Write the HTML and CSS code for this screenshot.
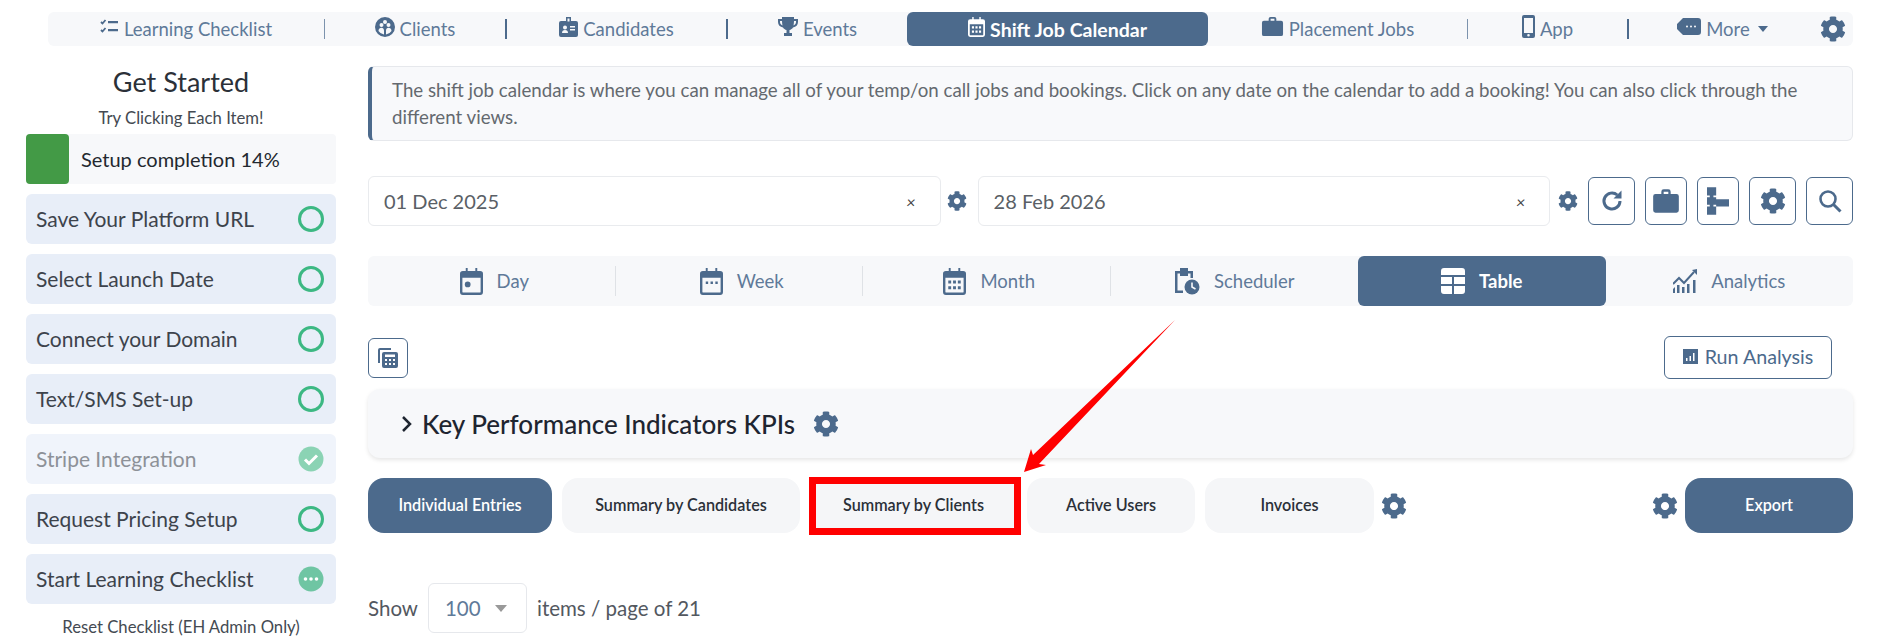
FILE: index.html
```html
<!DOCTYPE html>
<html lang="en">

<head>
  <meta charset="UTF-8">
  <meta name="viewport" content="width=device-width, initial-scale=1.0">
  <title>Shift Job Calendar</title>
  <link rel="stylesheet" href="styles.css">
</head>

<body>
  <svg class="defs" width="0" height="0">
    <symbol id="gear" viewBox="0 0 512 512">
      <path d="M487.4 315.7l-42.6-24.6c4.3-23.2 4.3-47 0-70.2l42.6-24.6c4.9-2.8 7.1-8.6 5.5-14-11.1-35.6-30-67.8-54.7-94.6-3.8-4.1-10-5.1-14.8-2.3L380.8 110c-17.9-15.4-38.5-27.3-60.8-35.1V25.8c0-5.6-3.9-10.5-9.4-11.7-36.7-8.2-74.3-7.8-109.2 0-5.5 1.2-9.4 6.1-9.4 11.7V75c-22.2 7.9-42.8 19.8-60.8 35.1L88.7 85.5c-4.9-2.8-11-1.9-14.8 2.3-24.7 26.7-43.6 58.9-54.7 94.6-1.7 5.4.6 11.2 5.5 14L67.3 221c-4.3 23.2-4.3 47 0 70.2l-42.6 24.6c-4.9 2.8-7.1 8.6-5.5 14 11.1 35.6 30 67.8 54.7 94.6 3.8 4.1 10 5.1 14.8 2.3l42.6-24.6c17.9 15.4 38.5 27.3 60.8 35.1v49.2c0 5.6 3.9 10.5 9.4 11.7 36.7 8.2 74.3 7.8 109.2 0 5.5-1.2 9.4-6.1 9.4-11.7v-49.2c22.2-7.9 42.8-19.8 60.8-35.1l42.6 24.6c4.9 2.8 11 1.9 14.8-2.3 24.7-26.7 43.6-58.9 54.7-94.6 1.5-5.5-.7-11.3-5.6-14.1zM256 336c-44.1 0-80-35.9-80-80s35.9-80 80-80 80 35.9 80 80-35.9 80-80 80z"/>
    </symbol>
    <symbol id="brief" viewBox="0 0 24 24">
      <path d="M8 6V4a2 2 0 0 1 2-2h4a2 2 0 0 1 2 2v2h5a2 2 0 0 1 2 2v12a2 2 0 0 1-2 2H3a2 2 0 0 1-2-2V8a2 2 0 0 1 2-2zm2 0h4V4h-4z" fill-rule="evenodd"/>
    </symbol>
    <symbol id="cal_day" viewBox="0 0 24 28">
      <path d="M6 0h2v3h8V0h2v3h3a3 3 0 0 1 3 3v19a3 3 0 0 1-3 3H3a3 3 0 0 1-3-3V6a3 3 0 0 1 3-3h3zM2.500 10v15a.5.5 0 0 0 .5.500h18a.5.5 0 0 0 .5-.5V10z" fill-rule="evenodd"/>
      <circle cx="8" cy="17" r="3"/>
    </symbol>
    <symbol id="cal_week" viewBox="0 0 24 28">
      <path d="M6 0h2v3h8V0h2v3h3a3 3 0 0 1 3 3v19a3 3 0 0 1-3 3H3a3 3 0 0 1-3-3V6a3 3 0 0 1 3-3h3zM2.500 10v15a.5.5 0 0 0 .5.500h18a.5.5 0 0 0 .5-.5V10z" fill-rule="evenodd"/>
      <path d="M6 14h2.500v2.500H6zM11 14h2.500v2.500H11zM16 14h2.500v2.500H16z"/>
    </symbol>
    <symbol id="cal_month" viewBox="0 0 24 28">
      <path d="M6 0h2v3h8V0h2v3h3a3 3 0 0 1 3 3v19a3 3 0 0 1-3 3H3a3 3 0 0 1-3-3V6a3 3 0 0 1 3-3h3zM2.500 10v15a.5.5 0 0 0 .5.500h18a.5.5 0 0 0 .5-.5V10z" fill-rule="evenodd"/>
      <path d="M5.500 13h3v3h-3zM10.500 13h3v3h-3zM15.500 13h3v3h-3zM5.500 19h3v3h-3zM10.500 19h3v3h-3zM15.500 19h3v3h-3z"/>
    </symbol>
  </svg>

  <nav class="topnav">
    <a class="topnav_item w_learning">
      <svg class="ico" width="19" height="16" viewBox="0 0 19 16"><path d="M1 3l1.500 1.500L5.500 1M1 11l1.500 1.500L5.500 9" fill="none" stroke="currentColor" stroke-width="1.800"/><path d="M8 2h10v2.200H8zM8 10h10v2.200H8z"/></svg>
      Learning Checklist
    </a>
    <i class="nav_sep"></i>
    <a class="topnav_item w_clients">
      <svg class="ico" width="20" height="20" viewBox="0 0 20 20"><path d="M10 0a10 10 0 1 0 0 20 10 10 0 0 0 0-20zM6.500 6a2 2 0 1 1 0 4 2 2 0 0 1 0-4zm7 0a2 2 0 1 1 0 4 2 2 0 0 1 0-4zM10 3a2 2 0 1 1 0 4 2 2 0 0 1 0-4zM3.500 14c0-2 1.500-3.200 3-3.200s2.500 1.200 2.500 3v3.800a8 8 0 0 1-5.500-3.600zm13 0a8 8 0 0 1-5.500 3.600V14c0-2 1-3.200 2.500-3.200s3 1.200 3 3.200z" fill-rule="evenodd"/></svg>
      Clients
    </a>
    <i class="nav_sep sep_dark"></i>
    <a class="topnav_item w_cands">
      <svg class="ico" width="19" height="20" viewBox="0 0 19 20"><path d="M7 0h5v4h5a2 2 0 0 1 2 2v12a2 2 0 0 1-2 2H2a2 2 0 0 1-2-2V6a2 2 0 0 1 2-2h5zm1.500 1.500v3h2v-3zM6 8.500a2 2 0 1 0 0 4 2 2 0 0 0 0-4zM3 16h6c0-2-1-3-3-3s-3 1-3 3zm8-7v1.500h5V9zm0 3v1.500h5V12z" fill-rule="evenodd"/></svg>
      Candidates
    </a>
    <i class="nav_sep sep_dark"></i>
    <a class="topnav_item w_events">
      <svg class="ico" width="20" height="19" viewBox="0 0 20 19"><path d="M4 0h12v2h4v3c0 3-2 5-5 5.500-.8 1.300-2 2.200-3.500 2.500v3H14v3H6v-3h2.500v-3C7 12.700 5.800 11.800 5 10.500 2 10 0 8 0 5V2h4zM2 4v1c0 1.600.8 2.800 2.500 3.400C4.200 7 4 5.500 4 4zm16 0h-2c0 1.500-.2 3-.5 4.400C17.200 7.800 18 6.600 18 5z" fill-rule="evenodd"/></svg>
      Events
    </a>
    <a class="topnav_item topnav_active">
      <svg class="ico" width="17" height="20"><use href="#cal_month"/></svg>
      Shift Job Calendar
    </a>
    <a class="topnav_item w_place">
      <svg class="ico" width="23" height="23"><use href="#brief"/></svg>
      Placement Jobs
    </a>
    <i class="nav_sep"></i>
    <a class="topnav_item w_app">
      <svg class="ico" width="13" height="23" viewBox="0 0 13 23"><path d="M2 0h9a2 2 0 0 1 2 2v19a2 2 0 0 1-2 2H2a2 2 0 0 1-2-2V2a2 2 0 0 1 2-2zm0 3v15h9V3zm4.500 16a1.300 1.300 0 1 0 0 2.600 1.300 1.300 0 0 0 0-2.600z" fill-rule="evenodd"/></svg>
      App
    </a>
    <i class="nav_sep sep_dark"></i>
    <a class="topnav_item w_more">
      <svg class="ico" width="24" height="17" viewBox="0 0 24 17"><path d="M6 0h15a3 3 0 0 1 3 3v11a3 3 0 0 1-3 3H6l-6-6V6zm4 7.500a1 1 0 1 0 0 2 1 1 0 0 0 0-2zm4 0a1 1 0 1 0 0 2 1 1 0 0 0 0-2zm4 0a1 1 0 1 0 0 2 1 1 0 0 0 0-2z" fill-rule="evenodd"/></svg>
      More<span class="caret"></span>
    </a>
    <svg class="nav_gear" width="26" height="26"><use href="#gear"/></svg>
  </nav>

  <div class="layout">
    <aside class="side">
      <h2 class="side_title">Get Started</h2>
      <p class="side_sub">Try Clicking Each Item!</p>
      <div class="progress">
        <div class="progress_fill"></div>
        <span class="progress_txt">Setup completion 14%</span>
      </div>
      <div class="check"><span>Save Your Platform URL</span><i class="ring"></i></div>
      <div class="check"><span>Select Launch Date</span><i class="ring"></i></div>
      <div class="check"><span>Connect your Domain</span><i class="ring"></i></div>
      <div class="check"><span>Text/SMS Set-up</span><i class="ring"></i></div>
      <div class="check check_done"><span>Stripe Integration</span>
        <svg width="26" height="26" viewBox="0 0 26 26"><circle cx="13" cy="13" r="12.500" fill="#8bd3b4"/><path d="M7 13.500l4 4 8-8" fill="none" stroke="#fff" stroke-width="3"/></svg>
      </div>
      <div class="check"><span>Request Pricing Setup</span><i class="ring"></i></div>
      <div class="check"><span>Start Learning Checklist</span>
        <svg width="26" height="26" viewBox="0 0 26 26"><circle cx="13" cy="13" r="12.500" fill="#6fc5a3"/><circle cx="7.500" cy="13" r="1.800" fill="#fff"/><circle cx="13" cy="13" r="1.800" fill="#fff"/><circle cx="18.500" cy="13" r="1.800" fill="#fff"/></svg>
      </div>
      <p class="side_reset">Reset Checklist (EH Admin Only)</p>
    </aside>

    <main class="main">
      <div class="notice">The shift job calendar is where you can manage all of your temp/on call jobs and bookings. Click on any date on the calendar to add a booking! You can also click through the different views.</div>

      <div class="dates">
        <div class="date_input date_a"><span>01 Dec 2025</span><em>×</em></div>
        <svg class="gear_sm gear_a" width="20" height="20"><use href="#gear"/></svg>
        <div class="date_input date_b"><span>28 Feb 2026</span><em>×</em></div>
        <svg class="gear_sm" width="20" height="20"><use href="#gear"/></svg>
        <button class="icon_btn wide">
          <svg width="24" height="24" viewBox="0 0 24 24"><path d="M20 12a8 8 0 1 1-2.700-6" fill="none" stroke="currentColor" stroke-width="3"/><path d="M21.500 1.500v8h-8z"/></svg>
        </button>
        <button class="icon_btn">
          <svg width="28" height="28"><use href="#brief"/></svg>
        </button>
        <button class="icon_btn">
          <svg width="22" height="30" viewBox="0 0 24 30"><path d="M0 0h10v9H7v2h3v8H7v2h3v9H0v-9h3v-2H0v-8h3V9H0zM10 13h14v8H10z"/></svg>
        </button>
        <button class="icon_btn wide">
          <svg width="26" height="26"><use href="#gear"/></svg>
        </button>
        <button class="icon_btn wide">
          <svg width="24" height="24" viewBox="0 0 24 24"><circle cx="10" cy="10" r="7.500" fill="none" stroke="currentColor" stroke-width="2.600"/><path d="M15.500 15.500L22.500 22.500" stroke="currentColor" stroke-width="3" fill="none"/></svg>
        </button>
      </div>

      <div class="views">
        <a class="view">
          <svg width="23" height="27"><use href="#cal_day"/></svg>
          <span>Day</span>
        </a>
        <a class="view">
          <svg width="23" height="27"><use href="#cal_week"/></svg>
          <span>Week</span>
        </a>
        <a class="view">
          <svg width="23" height="27"><use href="#cal_month"/></svg>
          <span>Month</span>
        </a>
        <a class="view">
          <svg width="26" height="28" viewBox="0 0 26 28"><path d="M1 4h5V1h8v3h5v7h-2.500V6.500H14V9H6V6.500H3.500v17H9V26H1z"/><circle cx="18" cy="20" r="7.500"/><path d="M18 15.500V20l3.500 2" fill="none" stroke="#f7f8fa" stroke-width="1.600"/></svg>
          <span>Scheduler</span>
        </a>
        <a class="view view_active">
          <svg width="24" height="26" viewBox="0 0 24 26"><path d="M3 0h18a3 3 0 0 1 3 3v4H0V3a3 3 0 0 1 3-3zM0 9h11v7H0zM13 9h11v7H13zM0 18h11v8H3a3 3 0 0 1-3-3zM13 18h11v5a3 3 0 0 1-3 3h-8z"/></svg>
          <span>Table</span>
        </a>
        <a class="view">
          <svg width="24" height="24" viewBox="0 0 24 24"><path d="M0 20l2-2v6H0zM4 16h2.500v8H4zM9 18h2.500v6H9zM14 15h2.500v9H14zM20 11h2.500v13H20z"/><path d="M0 15l6-6 5 5 10-11" fill="none" stroke="currentColor" stroke-width="2"/><path d="M24 0v6l-5-5z"/></svg>
          <span>Analytics</span>
        </a>
      </div>

      <div class="tools">
        <button class="copy_btn">
          <svg width="20" height="20" viewBox="0 0 20 20"><path d="M2 0h11v2H2v13H0V2a2 2 0 0 1 2-2z"/><path d="M6 4h12a2 2 0 0 1 2 2v12a2 2 0 0 1-2 2H6a2 2 0 0 1-2-2V6a2 2 0 0 1 2-2zm1 2.500V9h10V6.500zM7 11v2h2v-2zm4 0v2h2v-2zm4 0v2h2v-2zM7 15v2h2v-2zm4 0v2h2v-2zm4 0v2h2v-2z" fill-rule="evenodd"/></svg>
        </button>
        <button class="run_btn">
          <svg width="15" height="15" viewBox="0 0 15 15"><path d="M0 0h15v15H0zM3 9v3h1.500V9zm3.500-2v5H8V7zM10 4v8h1.500V4z" fill-rule="evenodd"/></svg>
          Run Analysis
        </button>
      </div>

      <div class="kpi">
        <svg class="kpi_chev" width="12" height="18" viewBox="0 0 12 18"><path d="M2 2l7 7-7 7" fill="none" stroke="#1e2530" stroke-width="2.500"/></svg>
        <span class="kpi_title">Key Performance Indicators KPIs</span>
        <svg width="26" height="26"><use href="#gear"/></svg>
      </div>

      <div class="subtabs">
        <button class="subtab sub_active w_ind">Individual Entries</button>
        <button class="subtab w_can">Summary by Candidates</button>
        <button class="subtab w_cli">Summary by Clients</button>
        <button class="subtab w_act">Active Users</button>
        <button class="subtab w_inv">Invoices</button>
        <svg class="sub_gear" width="26" height="26"><use href="#gear"/></svg>
        <svg class="push" width="26" height="26"><use href="#gear"/></svg>
        <button class="subtab sub_active w_exp">Export</button>
      </div>

      <div class="pager">
        Show
        <div class="page_select"><span>100</span><i class="select_caret"></i></div>
        items / page of 21
      </div>
    </main>
  </div>

  <!-- annotation drawn on top of the screenshot -->
  <div class="mark_box"></div>
  <svg class="mark_arrow" width="1884" height="642" viewBox="0 0 1884 642">
    <polygon points="1175,320 1039,464 1046,465 1024,472 1031,449 1033,455" fill="#ff0000"/>
  </svg>
</body>

</html>
```

FILE: styles.css
```css
* {
  box-sizing: border-box;
}

html,
body {
  margin: 0;
  height: 642px;
  overflow: hidden;
}

body {
  position: relative;
  background: #fff;
  color: #2b3038;
  font-family: "Lato", "Noto Sans", sans-serif;
}

.defs {
  position: absolute;
}

svg {
  fill: #4c6a8c;
  color: #4c6a8c;
  flex: none;
}

/* top nav */
.topnav {
  display: flex;
  align-items: center;
  width: 1805px;
  height: 34px;
  margin: 12px 0 0 48px;
  background: #f7f8fa;
  border-radius: 6px;
  font-size: 18.500px;
  color: #5f7a99;
}

.topnav_item {
  display: flex;
  align-items: center;
  justify-content: center;
  gap: 5px;
  height: 34px;
  white-space: nowrap;
}

.topnav_item .ico {
  margin-bottom: 5px;
}

.w_learning { width: 276px; }
.w_clients { width: 180px; }
.w_cands { width: 219px; }
.w_events { width: 179px; }
.w_place { width: 259px; }
.w_app { width: 159px; }
.w_more { width: 187px; }

.nav_sep {
  flex: none;
  width: 1px;
  height: 20px;
  background: #7c93ad;
}

.sep_dark {
  width: 2px;
  background: #4c6a8c;
}

.topnav_active {
  width: 301px;
  background: #4c6a8c;
  color: #fff;
  font-size: 19.500px;
  font-weight: 700;
  border-radius: 6px;
}

.topnav_active svg {
  fill: #fff;
}

.nav_gear {
  margin-left: 4px;
}

.caret {
  display: inline-block;
  margin-left: 3px;
  border: 5.500px solid transparent;
  border-top: 6px solid #4c6a8c;
  border-bottom: 0;
}

/* layout */
.layout {
  display: flex;
  padding: 20px 31px 0 26px;
  gap: 32px;
}

.side {
  display: flex;
  flex-direction: column;
  width: 310px;
  flex: none;
  gap: 10px;
}

.side_title {
  margin: 0;
  height: 32px;
  line-height: 32px;
  font-size: 27px;
  font-weight: 400;
  text-align: center;
}

.side_sub {
  margin: -1px 0 0;
  height: 22px;
  line-height: 22px;
  font-size: 16.700px;
  color: #444a52;
  text-align: center;
}

.progress {
  display: flex;
  align-items: center;
  height: 50px;
  margin-top: -5px;
  background: #f7f8fa;
  border-radius: 4px;
  font-size: 20px;
  color: #23282f;
}

.progress_fill {
  width: 43px;
  height: 50px;
  background: #439a46;
  border-radius: 4px;
}

.progress_txt {
  margin-left: 12px;
}

.check {
  display: flex;
  align-items: center;
  justify-content: space-between;
  height: 50px;
  padding: 0 12px 0 10px;
  background: #e8eef8;
  border-radius: 6px;
  font-size: 21px;
  color: #3d434c;
}

.check span {
  margin-bottom: 2px;
}

.check_done {
  background: #f0f4fb;
  color: #8d9198;
}

.ring {
  width: 26px;
  height: 26px;
  border: 3px solid #3cb883;
  border-radius: 50%;
}

.side_reset {
  margin: 3px 0 0;
  font-size: 16.700px;
  color: #444a52;
  text-align: center;
}

/* main column */
.main {
  flex: 1;
  min-width: 0;
}

.notice {
  height: 75px;
  padding: 10px 20px 0 20px;
  background: #f8f9fb;
  border: 1px solid #e6e8ec;
  border-left: 4px solid #4c6a8c;
  border-radius: 6px;
  font-size: 18.700px;
  line-height: 27px;
  color: #64696f;
}

.dates {
  display: flex;
  align-items: center;
  margin-top: 35px;
  height: 50px;
}

.date_input {
  display: flex;
  align-items: center;
  justify-content: space-between;
  height: 50px;
  padding: 0 24px 0 15px;
  border: 1px solid #e9ebee;
  border-radius: 6px;
  font-size: 20px;
  color: #5a5f66;
}

.date_input em {
  font-size: 16px;
  color: #444;
}

.date_a { width: 573px; }
.date_b { width: 573px; }

.gear_sm {
  margin: 0 10px 0 8px;
}

.gear_a {
  margin: 0 11px 0 6px;
}

.icon_btn {
  display: flex;
  align-items: center;
  justify-content: center;
  width: 42px;
  height: 48px;
  margin-right: 10px;
  padding: 0;
  background: #fff;
  border: 1px solid #4c6a8c;
  border-radius: 6px;
}

.icon_btn.wide {
  width: 47px;
}

.icon_btn:last-child {
  margin-right: 0;
}

.views {
  display: flex;
  height: 50px;
  margin-top: 30px;
  background: #f7f8fa;
  border-radius: 6px;
}

.view {
  position: relative;
  display: flex;
  align-items: center;
  justify-content: center;
  gap: 14px;
  flex: none;
  width: calc(100% / 6);
  font-size: 18.500px;
  color: #5f7a99;
}

.view:nth-child(-n+3) {
  padding-left: 5px;
}

.view:nth-child(-n+3)::after {
  content: "";
  position: absolute;
  right: 0;
  top: 10px;
  width: 1px;
  height: 30px;
  background: #dfe2e6;
}

.view_active {
  background: #4c6a8c;
  color: #fff;
  font-weight: 700;
  border-radius: 6px;
}

.view_active svg {
  fill: #fff;
}

.tools {
  display: flex;
  align-items: center;
  justify-content: space-between;
  height: 43px;
  margin-top: 30px;
  padding-right: 21px;
}

.copy_btn {
  display: flex;
  align-items: center;
  justify-content: center;
  width: 40px;
  height: 40px;
  padding: 0;
  background: #fff;
  border: 1px solid #4c6a8c;
  border-radius: 6px;
}

.run_btn {
  display: flex;
  align-items: center;
  justify-content: center;
  gap: 7px;
  width: 168px;
  height: 43px;
  padding: 0 0 2px;
  background: #fff;
  border: 1px solid #4c6a8c;
  border-radius: 6px;
  font: 19.700px "Lato", sans-serif;
  color: #4c6a8c;
}

.kpi {
  display: flex;
  align-items: center;
  height: 69px;
  margin-top: 10px;
  padding-left: 33px;
  background: #f7f8fa;
  border-radius: 12px;
  box-shadow: 0 2px 4px rgba(0, 0, 0, 0.1);
}

.kpi_chev {
  margin-right: 9px;
}

.kpi_title {
  margin-right: 18px;
  font-size: 26px;
  font-weight: 500;
  color: #1e2530;
}

.subtabs {
  display: flex;
  align-items: center;
  height: 55px;
  margin-top: 20px;
  gap: 10px;
}

.subtab {
  height: 55px;
  padding: 0 0 2px;
  background: #f5f6f8;
  border: 0;
  border-radius: 16px;
  font: 600 16.200px "Lato", sans-serif;
  color: #2b3038;
}

.sub_active {
  background: #4c6a8c;
  color: #fff;
}

.w_ind { width: 184px; }
.w_can { width: 238px; }
.w_cli { width: 207px; }
.w_act { width: 168px; }
.w_inv { width: 169px; }
.w_exp { width: 168px; margin-left: -3px; }

.sub_gear {
  margin-left: -3px;
}

.push {
  margin-left: auto;
}

.pager {
  display: flex;
  align-items: center;
  gap: 10px;
  height: 50px;
  margin-top: 50px;
  font-size: 20.500px;
  color: #53585f;
}

.page_select {
  display: flex;
  align-items: center;
  justify-content: space-between;
  width: 99px;
  height: 50px;
  padding: 0 19px 0 16px;
  border: 1px solid #e6e8ec;
  border-radius: 6px;
  color: #5f7a99;
}

.select_caret {
  border: 6px solid transparent;
  border-top: 7px solid #999;
  border-bottom: 0;
}

/* red annotation over the page */
.mark_box {
  position: absolute;
  left: 809px;
  top: 477px;
  width: 212px;
  height: 58px;
  border: 7px solid #f00;
}

.mark_arrow {
  position: absolute;
  left: 0;
  top: 0;
  pointer-events: none;
}
```
